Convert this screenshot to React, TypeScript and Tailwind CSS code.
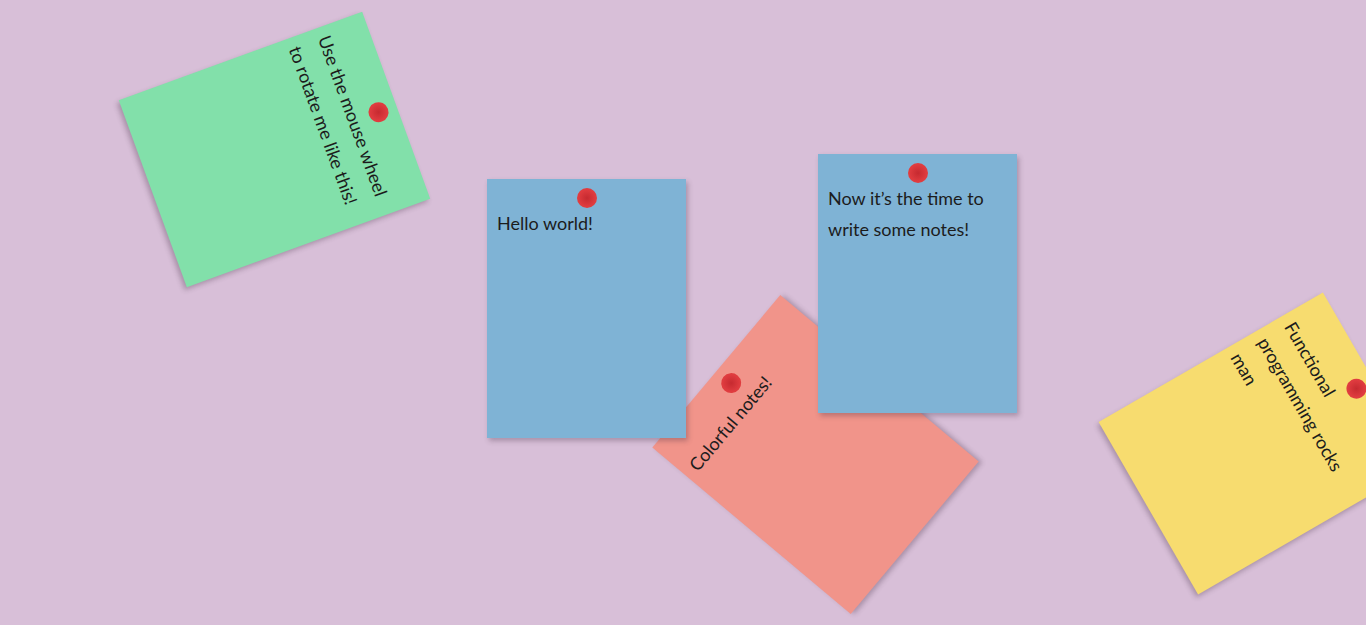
import React from "react";

type Note = {
  text: string;
  cls: string;
};

const notes: Note[] = [
  {
    text: "Use the mouse wheel to rotate me like this!",
    cls: "left-[175px] top-[20px] rotate-[70deg] bg-[#82e0aa]",
  },
  {
    text: "Colorful notes!",
    cls: "left-[716px] top-[325px] -rotate-[50deg] bg-[#f1948a]",
  },
  {
    text: "Hello world!",
    cls: "left-[487px] top-[179px] bg-[#7fb3d5]",
  },
  {
    text: "Now it\u2019s the time to write some notes!",
    cls: "left-[818px] top-[154px] bg-[#7fb3d5]",
  },
  {
    text: "Functional programming rocks man",
    cls: "left-[1161px] top-[314px] rotate-[60deg] bg-[#f7dc6f]",
  },
];

function Pin() {
  return (
    <div className="h-5 w-5 shrink-0 self-center rounded-full bg-[radial-gradient(circle,#c62a30_0%,#df3b3f_60%,#e4443f_100%)]" />
  );
}

export default function App() {
  return (
    <div
      className="relative h-screen w-full overflow-hidden bg-[#d8bfd8]"
      style={{ fontFamily: "Lato, 'Open Sans', sans-serif" }}
    >
      {notes.map((n, i) => (
        <div
          key={i}
          className={
            "absolute flex h-[259px] w-[199px] flex-col px-[10px] pt-[9px] shadow-[2px_3px_5px_rgba(60,40,60,0.3)] " +
            n.cls
          }
        >
          <Pin />
          <p className="text-[18px] leading-[31px] text-[#1c1c1c]">{n.text}</p>
        </div>
      ))}
    </div>
  );
}
